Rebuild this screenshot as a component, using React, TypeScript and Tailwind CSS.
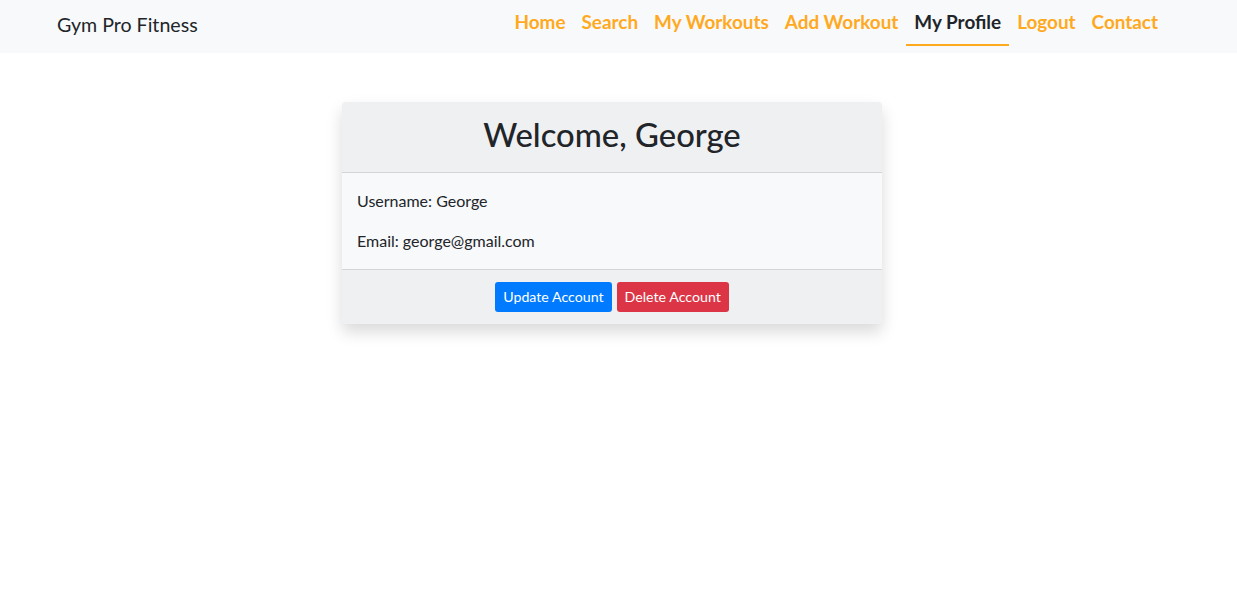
const NAV_LINKS = ['Home', 'Search', 'My Workouts', 'Add Workout', 'My Profile', 'Logout', 'Contact']
const ACTIVE = 'My Profile'

function App() {
  return (
    <div className="min-h-screen bg-white font-['Lato',sans-serif] text-[#212529]">
      <nav className="flex h-[53px] items-center justify-between bg-[#f8f9fa] pl-[57px] pr-[71px]">
        <a href="#" className="mb-[3px] text-[19.6px] leading-none text-[#212529]">
          Gym Pro Fitness
        </a>

        <ul className="flex h-full items-center">
          {NAV_LINKS.map((label) => (
            <li key={label} className="flex h-full items-center">
              <a
                href="#"
                className={
                  label === ACTIVE
                    ? 'mt-[1px] border-b-2 border-[#ffa91f] px-2 pt-[2px] pb-[10px] text-[18.9px] font-bold leading-[24px] text-[#212529]'
                    : 'mt-[1px] border-b-2 border-transparent px-2 pt-[2px] pb-[10px] text-[18.9px] font-bold leading-[24px] text-[#ffa91f]'
                }
              >
                {label}
              </a>
            </li>
          ))}
        </ul>
      </nav>

      <main className="flex justify-center pt-[49px] pr-[13px]">
        <section className="w-[540px] overflow-hidden rounded-[4px] bg-[#f8f9fa] shadow-[0_8px_16px_rgba(0,0,0,0.15)]">
          <header className="flex h-[71px] items-center justify-center border-b border-[#d3d5d8] bg-[#eff0f2]">
            <h2 className="mb-[4px] text-[32.8px] font-medium leading-none">Welcome, George</h2>
          </header>

          <div className="flex flex-col gap-[24px] px-[15px] pt-[20px] pb-[20px] text-[16px] leading-[16px]">
            <p>Username: George</p>
            <p>Email: george@gmail.com</p>
          </div>

          <footer className="flex h-[55px] items-center justify-center gap-[5px] border-t border-[#d3d5d8] bg-[#eff0f2]">
            <button
              type="button"
              className="h-[30px] rounded-[3px] bg-[#007bff] px-2 text-[14.2px] text-white"
            >
              Update Account
            </button>
            <button
              type="button"
              className="h-[30px] rounded-[3px] bg-[#dc3545] px-2 text-[14.2px] text-white"
            >
              Delete Account
            </button>
          </footer>
        </section>
      </main>
    </div>
  )
}

export default App
